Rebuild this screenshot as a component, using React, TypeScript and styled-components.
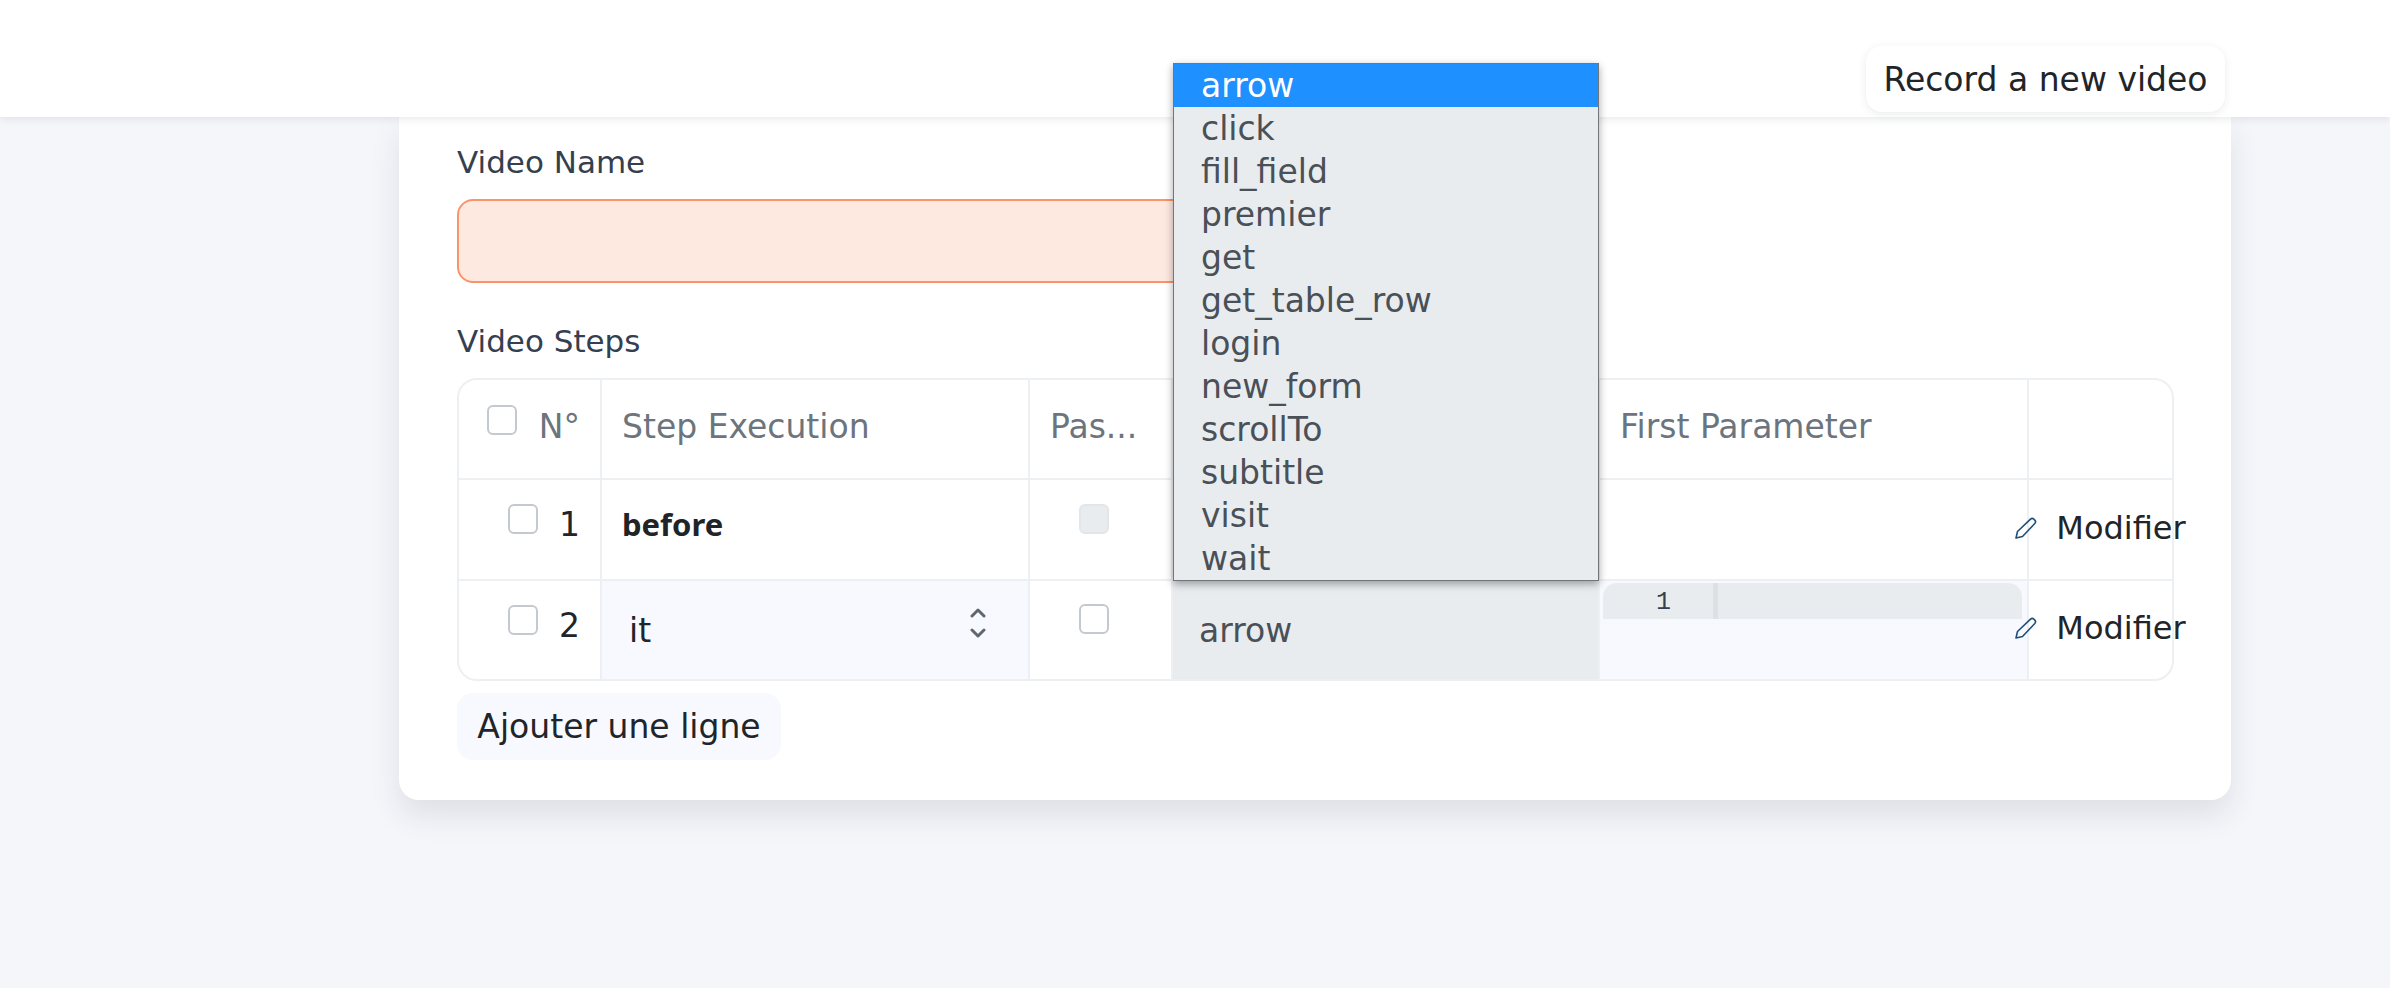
import React from 'react'
import styled, { createGlobalStyle } from 'styled-components'

const FONT = "'DejaVu Sans', 'Noto Sans', 'Liberation Sans', sans-serif"

const colors = {
  page: '#f5f6fa',
  line: '#edf0f3',
  soft: '#f8f9fe',
  muted: '#6c757d',
  field: '#e9ecef',
  ink: '#212529',
  optionInk: '#495057',
}

const GlobalStyle = createGlobalStyle`
  html, body {
    margin: 0;
    padding: 0;
    background: ${colors.page};
    font-family: ${FONT};
    color: ${colors.ink};
  }
  * {
    box-sizing: border-box;
  }
`

const Page = styled.div`
  width: 2390px;
  height: 988px;
  overflow: hidden;
  background: ${colors.page};
`

const TopBar = styled.header`
  position: relative;
  z-index: 2;
  height: 117px;
  padding: 46px 165px 0 0;
  display: flex;
  justify-content: flex-end;
  align-items: flex-start;
  background: #fff;
  box-shadow: 0 2px 8px rgba(30, 40, 60, 0.1);
`

const RecordButton = styled.button`
  width: 359px;
  height: 66px;
  padding: 0;
  border: 0;
  border-radius: 16px;
  background: #fff;
  font-family: ${FONT};
  font-size: 33px;
  color: ${colors.ink};
  box-shadow: 0 2px 8px rgba(30, 40, 60, 0.09);
`

const Card = styled.main`
  width: 1832px;
  height: 683px;
  margin-left: 399px;
  padding: 25px 58px 0;
  background: #fff;
  border-radius: 0 0 20px 20px;
  box-shadow: 0 16px 30px rgba(30, 40, 60, 0.1);
`

const FieldLabel = styled.label`
  display: block;
  height: 40px;
  line-height: 40px;
  font-size: 31px;
  color: #344050;
`

const NameInput = styled.div`
  width: 858px;
  height: 84px;
  margin: 17px 0 38px;
  background: #fee9e1;
  border: 2px solid #fb9468;
  border-radius: 16px;
`

const Grid = styled.div`
  width: 1717px;
  height: 303px;
  margin-top: 17px;
  border: 2px solid ${colors.line};
  border-radius: 20px;
  display: grid;
  grid-template-columns: 143px 428px 143px 427px 429px minmax(0, 1fr);
  grid-template-rows: 100px 101px 98px;
`

const Cell = styled.div<{ $soft?: boolean; $last?: boolean; $row?: number }>`
  position: relative;
  display: flex;
  align-items: center;
  padding-left: 20px;
  font-size: 33px;
  color: ${colors.ink};
  background: ${(p) => (p.$soft ? colors.soft : 'transparent')};
  border-right: ${(p) => (p.$last ? '0' : `2px solid ${colors.line}`)};
  border-bottom: ${(p) => (p.$row === 2 ? '0' : `2px solid ${colors.line}`)};
`

const HeadCell = styled(Cell)`
  color: ${colors.muted};
  padding-bottom: 6px;
`

const NumberHeadCell = styled(HeadCell)`
  justify-content: flex-end;
  gap: 22px;
  padding: 0 20px 6px 0;
`

const NumberCell = styled(Cell)`
  justify-content: flex-end;
  gap: 21px;
  padding: 0 20px 0 0;
`

const RowNumber = styled.span`
  margin-top: -10px;
`

const CenterCell = styled(Cell)`
  justify-content: center;
  padding: 0 14px 12px 0;
`

const Box = styled.span<{ $disabled?: boolean; $up?: number }>`
  display: block;
  width: 30px;
  height: 30px;
  margin-top: ${(p) => (p.$up ? `-${p.$up}px` : 0)};
  border: 2px solid ${(p) => (p.$disabled ? '#e3e6e9' : '#c4c9cf')};
  border-radius: 6px;
  background: ${(p) => (p.$disabled ? '#e9ecef' : '#fff')};
`

const StepName = styled.strong`
  font-family: 'Noto Sans', sans-serif;
  font-weight: 700;
  font-size: 31px;
  margin-top: -11px;
  color: #1f2429;
`

const SelectCell = styled(Cell)`
  padding: 0 27px;
  justify-content: space-between;
`

const SelectValue = styled.span`
  margin-top: 1px;
`

const ChevronStack = styled.span`
  display: flex;
  flex-direction: column;
  gap: 10px;
  margin: -14px 15px 0 0;
`

const ArrowCell = styled(Cell)`
  padding-left: 26px;
  background: ${colors.field};
  color: ${colors.optionInk};
`

const Dropdown = styled.ul`
  position: absolute;
  left: 0;
  bottom: 100%;
  z-index: 3;
  width: 426px;
  margin: 0;
  padding: 0;
  list-style: none;
  background: ${colors.field};
  border: 1px solid #72767a;
  box-shadow: 0 3px 8px rgba(0, 0, 0, 0.35);
`

const Option = styled.li<{ $active?: boolean }>`
  height: 43px;
  line-height: 43px;
  padding-left: 27px;
  font-size: 33px;
  color: ${(p) => (p.$active ? '#fff' : colors.optionInk)};
  background: ${(p) => (p.$active ? '#1e90ff' : 'transparent')};
`

const EditorCell = styled(Cell)`
  display: block;
  padding: 2px 5px 0 3px;
`

const EditorLine = styled.div`
  display: flex;
  height: 36px;
  background: ${colors.field};
  border-radius: 14px 14px 0 0;
`

const Gutter = styled.span`
  width: 115px;
  padding-right: 42px;
  text-align: right;
  line-height: 40px;
  font-family: 'Liberation Mono', monospace;
  font-size: 25px;
  color: #344050;
  border-right: 5px solid #dee1e4;
`

const ActionCell = styled(Cell)`
  justify-content: center;
  padding: 0 0 4px;
`

const EditAction = styled.span`
  display: flex;
  align-items: center;
  gap: 19px;
  font-size: 32px;
  white-space: nowrap;
`

const AddRow = styled.button`
  display: block;
  width: 324px;
  height: 67px;
  margin-top: 12px;
  padding: 0;
  border: 0;
  border-radius: 16px;
  background: ${colors.soft};
  font-family: ${FONT};
  font-size: 33px;
  color: ${colors.ink};
`

const PencilIcon = () => (
  <svg width="22" height="22" viewBox="0 0 22 22" fill="none" stroke="#1f4e79" strokeWidth="1.6" strokeLinejoin="round">
    <path d="M1 21l1.5-6.5L15.5 2.2c1-.9 2.4-.9 3.4 0l.9.9c.9 1 .9 2.4 0 3.4L7.5 19.5 1 21z" />
  </svg>
)

const Chevron = ({ up }: { up?: boolean }) => (
  <svg width="16" height="10" viewBox="0 0 16 10" fill="none" stroke="#5f6770" strokeWidth="3" strokeLinecap="round" strokeLinejoin="round">
    <path d={up ? 'M2 8l6-6 6 6' : 'M2 2l6 6 6-6'} />
  </svg>
)

const options = [
  'arrow',
  'click',
  'fill_field',
  'premier',
  'get',
  'get_table_row',
  'login',
  'new_form',
  'scrollTo',
  'subtitle',
  'visit',
  'wait',
]

const App: React.FC = () => {
  return (
    <Page>
      <GlobalStyle />
      <TopBar>
        <RecordButton>Record a new video</RecordButton>
      </TopBar>
      <Card>
        <FieldLabel>Video Name</FieldLabel>
        <NameInput />
        <FieldLabel>Video Steps</FieldLabel>
        <Grid>
          <NumberHeadCell>
            <Box $up={12} />
            N°
          </NumberHeadCell>
          <HeadCell>Step Execution</HeadCell>
          <HeadCell>Pas...</HeadCell>
          <HeadCell />
          <HeadCell>First Parameter</HeadCell>
          <HeadCell $last />

          <NumberCell>
            <Box $up={21} />
            <RowNumber>1</RowNumber>
          </NumberCell>
          <Cell>
            <StepName>before</StepName>
          </Cell>
          <CenterCell>
            <Box $disabled $up={10} />
          </CenterCell>
          <Cell />
          <Cell />
          <ActionCell $last>
            <EditAction>
              <PencilIcon />
              Modifier
            </EditAction>
          </ActionCell>

          <NumberCell $row={2}>
            <Box $up={21} />
            <RowNumber>2</RowNumber>
          </NumberCell>
          <SelectCell $row={2} $soft>
            <SelectValue>it</SelectValue>
            <ChevronStack>
              <Chevron up />
              <Chevron />
            </ChevronStack>
          </SelectCell>
          <CenterCell $row={2}>
            <Box $up={10} />
          </CenterCell>
          <ArrowCell $row={2}>
            arrow
            <Dropdown>
              {options.map((o, i) => (
                <Option key={o} $active={i === 0}>
                  {o}
                </Option>
              ))}
            </Dropdown>
          </ArrowCell>
          <EditorCell $row={2} $soft>
            <EditorLine>
              <Gutter>1</Gutter>
            </EditorLine>
          </EditorCell>
          <ActionCell $row={2} $last>
            <EditAction>
              <PencilIcon />
              Modifier
            </EditAction>
          </ActionCell>
        </Grid>
        <AddRow>Ajouter une ligne</AddRow>
      </Card>
    </Page>
  )
}

export default App
